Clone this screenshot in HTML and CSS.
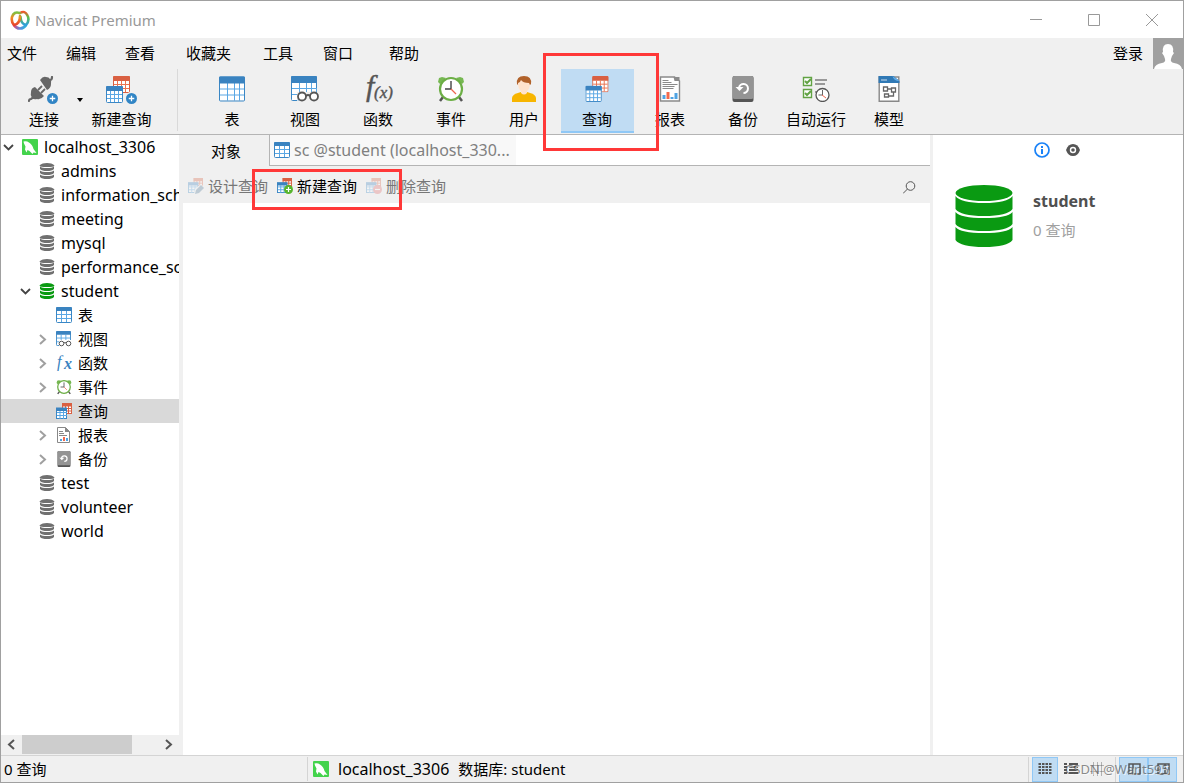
FILE: index.html
```html
<!DOCTYPE html>
<html lang="zh-CN">
<head>
<meta charset="utf-8">
<title>Navicat Premium</title>
<link rel="stylesheet" href="styles.css">
</head>
<body>
<svg class="sprite" aria-hidden="true">
  <defs>
    <linearGradient id="logo-left" x1="0" y1="0" x2="0" y2="1"><stop offset="0" stop-color="#7cc142"/><stop offset=".4" stop-color="#f08a24"/><stop offset="1" stop-color="#e8432e"/></linearGradient>
    <linearGradient id="logo-right" x1="0" y1="0" x2="0" y2="1"><stop offset="0" stop-color="#ee5a2c"/><stop offset=".4" stop-color="#5cbf4a"/><stop offset="1" stop-color="#2f9fe0"/></linearGradient>
    <linearGradient id="logo-base" x1="0" y1="0" x2="1" y2="0"><stop offset="0" stop-color="#d24a7c"/><stop offset=".5" stop-color="#5b8be0"/><stop offset="1" stop-color="#2ab6d9"/></linearGradient>
  </defs>
  <symbol id="table" viewBox="0 0 26 25"><path fill="#fff" d="M1 5h24v19H1z"/><path stroke="#5aa7e4" fill="none" d="M1 12.500h24M1 18.500h24M8.500 6v18M15.500 6v18M20.500 6v18"/><rect x=".5" y=".5" width="25" height="24" rx="1" fill="none" stroke="#3a87c5"/><path fill="#3a83c0" d="M0 1q0-1 1-1h24q1 0 1 1v6H0z"/></symbol>
  <symbol id="table-s" viewBox="0 0 16 16"><rect x=".5" y=".5" width="15" height="15" rx="1" fill="#fff" stroke="#3a87c5"/><path stroke="#5aa7e4" fill="none" d="M1 7.500h14M1 11.500h14M5.500 4v11M10.500 4v11"/><path fill="#3a83c0" d="M0 1q0-1 1-1h14q1 0 1 1v3H0z"/></symbol>
  <symbol id="grid-blue" viewBox="0 0 17 17"><rect x=".5" y=".5" width="16" height="16" rx="1" fill="#fff" stroke="#3a87c5"/><path stroke="#5aa7e4" fill="none" d="M1 8.500h15M1 12.500h15M4.500 5v11M8.500 5v11M12.500 5v11"/><path fill="#3a83c0" d="M0 1q0-1 1-1h15q1 0 1 1v4H0z"/></symbol>
  <symbol id="grid-red" viewBox="0 0 17 17"><rect x=".5" y=".5" width="16" height="16" rx="1" fill="#fff" stroke="#d96042"/><path stroke="#ea7350" fill="none" d="M1 8.500h15M1 12.500h15M4.500 5v11M8.500 5v11M12.500 5v11"/><path fill="#d96042" d="M0 1q0-1 1-1h15q1 0 1 1v4H0z"/></symbol>
  <symbol id="query" viewBox="0 0 24 27"><use href="#grid-red" x="7" y="0" width="17" height="17"/><use href="#grid-blue" x="0" y="10" width="17" height="17"/></symbol>
  <symbol id="query-s" viewBox="0 0 16 16"><rect x="6.500" y=".5" width="9" height="10" fill="#fff" stroke="#d96042"/><path stroke="#d96042" d="M7 5.500h9M7 8h9M12.500 3v8M9.500 3v8"/><path fill="#d96042" d="M6 0h10v3.500H6z"/><rect x=".5" y="5.500" width="10" height="10" fill="#fff" stroke="#3a87c5"/><path stroke="#5aa7e4" d="M1 9.500h10M1 12.500h10M4 8v8M7.500 8v8"/><path fill="#3a83c0" d="M0 4.500h11V8H0z"/></symbol>
  <symbol id="plus-blue" viewBox="0 0 12 12"><circle cx="6" cy="6" r="6" fill="#3185c5"/><path d="M6 3v6M3 6h6" stroke="#fff" stroke-width="1.400"/></symbol>
  <symbol id="query-add" viewBox="0 0 32 28"><use href="#query" width="24" height="27"/><circle cx="25.500" cy="22.500" r="6.500" fill="#f0f0f0"/><use href="#plus-blue" x="20" y="17" width="11" height="11"/></symbol>
  <symbol id="plug" viewBox="0 0 32 28"><path fill="none" stroke="#666" stroke-width="2.200" stroke-linecap="round" d="M1 25q0-2 2-2l3-2M24 1q0 3-2 3l-2 1"/><path fill="#666" d="m7 11 9 9q-3 4-7 3-3 1-5-1-2-3-1-6 0-4 4-5zM12 4q3-4 6-3 3 0 4 2 2 2 1 5 0 4-4 6z"/><path stroke="#666" stroke-width="1.800" d="m10 14 4-4m-1 7 4-4"/><circle cx="24.500" cy="22.500" r="6.500" fill="#f0f0f0"/><use href="#plus-blue" x="19" y="17" width="11" height="11"/></symbol>
  <symbol id="view" viewBox="0 0 28 26"><use href="#table" width="26" height="25"/><path fill="#f0f0f0" d="M6 16h22v10H6z"/><path stroke="#5aa7e4" d="M6.500 24h2M25.500 12v5"/><g fill="none" stroke="#555" stroke-width="1.800"><circle cx="11" cy="20.500" r="4" fill="#fff"/><circle cx="23" cy="20.500" r="4" fill="#fff"/><path d="M15 20q2-2 4 0"/></g></symbol>
  <symbol id="view-s" viewBox="0 0 16 16"><use href="#table-s" width="15" height="15"/><path fill="#fff" d="M3 9h13v7H3z"/><g fill="#fff" stroke="#555"><circle cx="5.500" cy="12.500" r="2.300"/><circle cx="12.500" cy="12.500" r="2.300"/><path d="M8 12q1-1 2 0"/></g></symbol>
  <symbol id="clock" viewBox="0 0 28 26"><path stroke="#555" stroke-width="2.500" d="m6 21-3 4m19-4 3 4"/><path fill="#76b852" d="m1 6 1-4 3-1 4 1-6 6zM27 6l-1-4-3-1-4 1 6 6z"/><circle cx="14" cy="13" r="11" fill="#fff" stroke="#6cae45" stroke-width="2.200"/><path stroke="#444" stroke-width="1.400" fill="none" d="M14 5v8H8"/><path stroke="#ef6650" stroke-width="1.300" d="m14 13 5 5"/></symbol>
  <symbol id="user" viewBox="0 0 24 26"><path fill="#f7b500" d="M0 26v-4q0-4 9-6h6q9 2 9 6v4z"/><path fill="#ffe3cc" d="M9 13h6v4q-3 3-6 0z"/><path fill="#ffe3cc" d="M6 5q6-5 12 0v4q-1 7-6 7T6 9z"/><path fill="#b1622a" d="M5 8q-1-8 7-8t7 8l-1 1-1-2q-6 0-8-3-1 3-3 3v2z"/></symbol>
  <symbol id="report" viewBox="0 0 21 26"><path fill="#fff" stroke="#8a8a8a" stroke-width="1.400" d="M1 1h14l5 4v20H1z"/><path fill="#8a8a8a" d="M14 1h6v4h-5z"/><path stroke="#8a8a8a" d="M3 4.500h6M3 6.500h9M3 8.500h15M3 10.500h12M3 12.500h11"/><path fill="#4fa3e3" d="M3 19h3v4H3zM11 21h3v2h-3zM15 17h3v6h-3z"/><path fill="#f2694c" d="M7 16h3v7H7z"/></symbol>
  <symbol id="report-s" viewBox="0 0 16 16"><path fill="#fff" stroke="#888" d="M1.500.5h8l4 4v11h-12z"/><path fill="#888" d="M9 0v5h5z"/><path stroke="#888" d="M3 4.500h4M3 6.500h5M3 8.500h8"/><path fill="#4fa3e3" d="M4 12h2v2H4zM10 11h2v3h-2z"/><path fill="#f2694c" d="M7 10h2v4H7z"/></symbol>
  <symbol id="backup" viewBox="0 0 21 26"><rect width="21" height="26" rx="2" fill="#555"/><rect width="21" height="23" rx="2" fill="#949494"/><path fill="none" stroke="#fff" stroke-width="2" d="M6.500 12a4.500 4.500 0 1 1 4.500 5"/><path fill="#fff" d="M3 11h8l-4 4z"/></symbol>
  <symbol id="auto" viewBox="0 0 28 26"><g fill="#fff" stroke="#62a344" stroke-width="1.400"><path d="M1.500 1.500h8v8h-8zM1.500 13.500h8v8h-8z"/><path fill="none" stroke-width="2" d="m3 5 2 2 4-4M3 17l2 2 4-4"/></g><path stroke="#999" stroke-width="2" d="M13 4h12M13 8h10M13 16h3"/><circle cx="20.500" cy="19" r="6.500" fill="#fff" stroke="#555" stroke-width="1.300"/><path fill="none" stroke="#666" d="M20.500 14v5h-4"/><path stroke="#ef6650" d="m20 19 4 3"/></symbol>
  <symbol id="model" viewBox="0 0 21 26"><path fill="#fff" stroke="#888" stroke-width="1.400" d="M.7 1h19.600v24.300H.7z"/><path fill="#3079b5" d="M0 0h15l6 5v2H0z"/><path fill="#64aeea" d="M14 0q1 5 7 5z"/><path stroke="#fff" stroke-dasharray="1 1" stroke-width="1.500" d="M3 4h6"/><g fill="none" stroke="#666" stroke-width="1.300"><path d="M5 11h4v4H5zM13 12h4v4h-4zM6 18h4v3H6zM9 13h4M15 16v4h-5"/></g></symbol>
  <symbol id="db" viewBox="0 0 58 62"><g fill="currentColor"><ellipse cx="29" cy="8" rx="28.500" ry="8"/><path d="M.5 11q5 7 28.500 7t28.500-7v13q-5 7-28.500 7T.5 24z"/><path d="M.5 27q5 6 28.500 6t28.500-6v12q-5 7-28.500 7T.5 39z"/><path d="M.5 42q5 6 28.500 6t28.500-6v13q-5 7-28.500 7T.5 55z"/></g></symbol>
  <symbol id="db-s" viewBox="0 0 16 16"><path fill="currentColor" d="M1 2q2-2 7-2t7 2-7 2-7-2zM1 3.500q2 1.500 7 1.500t7-1.500V6q-2 2-7 2T1 6zM1 7.500Q3 9 8 9t7-1.500V10q-2 2-7 2t-7-2zM1 11.500Q3 13 8 13t7-1.500V14q-2 2-7 2t-7-2z"/></symbol>
  <symbol id="mysql" viewBox="0 0 16 16"><rect width="16" height="16" rx="1" fill="#43d34c"/><path fill="#fff" d="M1.500 2.500q3-1 5.500 1 3.500 2 4.500 6.500l3 4-3-.5-1 1.500-3-3-2-1-1 2.500-1.500-3 .5-3-1.500-3z"/></symbol>
  <symbol id="down" viewBox="0 0 13 13"><path d="m2 4 4.500 4.500L11 4" fill="none" stroke="#444" stroke-width="1.800"/></symbol>
  <symbol id="right" viewBox="0 0 13 13"><path d="m4 2 5 4.500L4 11" fill="none" stroke="currentColor" stroke-width="2"/></symbol>
  <symbol id="badge-add" viewBox="0 0 16 16"><use href="#query-s" width="15" height="15"/><circle cx="11.500" cy="11.500" r="4.500" fill="#57b52e"/><path stroke="#fff" stroke-width="1.200" d="M11.500 9v5M9 11.500h5"/></symbol>
  <symbol id="badge-del" viewBox="0 0 16 16"><use href="#query-s" width="15" height="15"/><circle cx="11.500" cy="11.500" r="4.500" fill="#e26868"/><path stroke="#fff" stroke-width="1.200" d="M9 11.500h5"/></symbol>
  <symbol id="badge-edit" viewBox="0 0 16 16"><use href="#query-s" width="15" height="15"/><path fill="#f0f0f0" d="m6 16 1-5 6-5 3 3-6 7z"/><path fill="#4c7899" d="m7 16 1-4 5-5 3 3-5 5z"/></symbol>
</svg>

<div class="window">
  <header class="titlebar">
    <svg class="logo" viewBox="0 0 20 20" aria-hidden="true"><g fill="none" stroke-width="2.600" stroke-linecap="round"><path stroke="url(#logo-base)" d="M4 15q2 3.500 6 3.500t6-3.500"/><path stroke="url(#logo-right)" d="M10 3q5-3 7.500 2.500 2.500 5-1.500 9.500-5-1-5.500-8"/><path stroke="url(#logo-left)" d="M9.500 3Q4 1 2 7q-1 5 2 8 6-1 6-9"/></g></svg>
    <h1 class="title">Navicat Premium</h1>
    <div class="window-controls">
      <button aria-label="最小化"><svg viewBox="0 0 12 12"><path d="M0 5.500h12"/></svg></button>
      <button aria-label="最大化"><svg viewBox="0 0 12 12"><path d="M.5.5h11v11H.5z"/></svg></button>
      <button aria-label="关闭"><svg viewBox="0 0 12 12"><path d="m0 0 12 12M12 0 0 12"/></svg></button>
    </div>
  </header>

  <div class="menubar">
    <nav class="menu">
      <button>文件</button><button>编辑</button><button>查看</button><button>收藏夹</button><button>工具</button><button>窗口</button><button>帮助</button>
    </nav>
    <button class="login"><span>登录</span><svg viewBox="0 0 30 31" aria-hidden="true"><path fill="#a0a0a0" d="M0 0h30v31H0z"/><path fill="#fff" d="M1 31q1-5 8-6 4-1 3-4l-1-3-2-3 1-1q-1-8 5-8t5 8l1 1-2 3-1 3q-1 3 3 4 7 1 8 6z"/></svg></button>
  </div>

  <div class="toolbar">
    <div class="tools-start">
      <button class="tool connect"><svg class="i32"><use href="#plug"/></svg>连接</button>
      <button class="drop" aria-label="连接类型"></button>
      <button class="tool new-query"><svg class="i32"><use href="#query-add"/></svg>新建查询</button>
    </div>
    <div class="tools-main">
      <button class="tool"><svg class="i26"><use href="#table"/></svg>表</button>
      <button class="tool"><svg class="i28"><use href="#view"/></svg>视图</button>
      <button class="tool"><svg class="i28 fn" viewBox="0 0 28 26"><text class="fn-f" x="2" y="20">f</text><text class="fn-x" x="10" y="22">(x)</text></svg>函数</button>
      <button class="tool"><svg class="i28"><use href="#clock"/></svg>事件</button>
      <button class="tool"><svg class="i24"><use href="#user"/></svg>用户</button>
      <button class="tool active" aria-pressed="true"><svg class="i24"><use href="#query"/></svg>查询</button>
      <button class="tool"><svg class="i24"><use href="#report"/></svg>报表</button>
      <button class="tool"><svg class="i24"><use href="#backup"/></svg>备份</button>
      <button class="tool"><svg class="i28"><use href="#auto"/></svg>自动运行</button>
      <button class="tool"><svg class="i24"><use href="#model"/></svg>模型</button>
    </div>
  </div>

  <div class="workspace">
    <aside class="sidebar">
      <ul class="tree">
        <li class="node"><svg class="chevron"><use href="#down"/></svg><svg class="i16"><use href="#mysql"/></svg>localhost_3306</li>
        <li class="node level-1"><span class="chevron"></span><svg class="i16"><use href="#db-s"/></svg>admins</li>
        <li class="node level-1"><span class="chevron"></span><svg class="i16"><use href="#db-s"/></svg>information_schema</li>
        <li class="node level-1"><span class="chevron"></span><svg class="i16"><use href="#db-s"/></svg>meeting</li>
        <li class="node level-1"><span class="chevron"></span><svg class="i16"><use href="#db-s"/></svg>mysql</li>
        <li class="node level-1"><span class="chevron"></span><svg class="i16"><use href="#db-s"/></svg>performance_schema</li>
        <li class="node level-1"><svg class="chevron"><use href="#down"/></svg><svg class="i16 open"><use href="#db-s"/></svg>student</li>
        <li class="node level-2"><span class="chevron"></span><svg class="i16"><use href="#table-s"/></svg>表</li>
        <li class="node level-2"><svg class="chevron"><use href="#right"/></svg><svg class="i16"><use href="#view-s"/></svg>视图</li>
        <li class="node level-2"><svg class="chevron"><use href="#right"/></svg><svg class="i16 fn-small" viewBox="0 0 16 16"><text x="1" y="12">f</text><text class="bold" x="8" y="14">x</text></svg>函数</li>
        <li class="node level-2"><svg class="chevron"><use href="#right"/></svg><svg class="i16"><use href="#clock"/></svg>事件</li>
        <li class="node level-2 selected"><span class="chevron"></span><svg class="i16"><use href="#query-s"/></svg>查询</li>
        <li class="node level-2"><svg class="chevron"><use href="#right"/></svg><svg class="i16"><use href="#report-s"/></svg>报表</li>
        <li class="node level-2"><svg class="chevron"><use href="#right"/></svg><svg class="i16"><use href="#backup"/></svg>备份</li>
        <li class="node level-1"><span class="chevron"></span><svg class="i16"><use href="#db-s"/></svg>test</li>
        <li class="node level-1"><span class="chevron"></span><svg class="i16"><use href="#db-s"/></svg>volunteer</li>
        <li class="node level-1"><span class="chevron"></span><svg class="i16"><use href="#db-s"/></svg>world</li>
      </ul>
      <div class="scrollbar">
        <button aria-label="向左滚动"><svg class="chevron flip"><use href="#right"/></svg></button>
        <div class="track"><div class="thumb"></div></div>
        <button aria-label="向右滚动"><svg class="chevron"><use href="#right"/></svg></button>
      </div>
    </aside>

    <main class="content">
      <div class="tabs">
        <button class="tab current">对象</button>
        <div class="tab-strip"><button class="tab"><svg class="i16"><use href="#table-s"/></svg>sc @student (localhost_330...</button></div>
      </div>
      <div class="actions">
        <button class="action" disabled><svg class="i16"><use href="#badge-edit"/></svg>设计查询</button>
        <button class="action"><svg class="i16"><use href="#badge-add"/></svg>新建查询</button>
        <button class="action" disabled><svg class="i16"><use href="#badge-del"/></svg>删除查询</button>
        <button class="search" aria-label="搜索"><svg viewBox="0 0 13 13"><circle cx="7.500" cy="5" r="4.300"/><path d="M4.500 8 0 12.500"/></svg></button>
      </div>
      <div class="objects"></div>
    </main>

    <aside class="details">
      <div class="detail-tabs">
        <button aria-label="信息"><svg viewBox="0 0 16 16"><circle cx="8" cy="8" r="7" fill="none" stroke="#1a82f7" stroke-width="1.700"/><path fill="#1a82f7" d="M7 4h2v2H7zM7 7h2v5H7z"/></svg></button>
        <button aria-label="预览"><svg viewBox="0 0 16 16"><path fill="#555" d="M1 8q2-6 7-6t7 6q-2 6-7 6T1 8z"/><circle cx="8" cy="8" r="2.500" fill="none" stroke="#fff" stroke-width="1.400"/></svg></button>
      </div>
      <div class="summary">
        <svg class="big-db"><use href="#db"/></svg>
        <div><h2>student</h2><p>0 查询</p></div>
      </div>
    </aside>
  </div>

  <footer class="statusbar">
    <div class="count">0 查询</div>
    <div class="path"><svg class="i16"><use href="#mysql"/></svg><span class="host">localhost_3306</span><span>数据库: student</span></div>
    <div class="view-modes">
      <button class="mode on" aria-label="列表"><svg viewBox="0 0 16 16"><path stroke-dasharray="2.500 1" stroke-width="2" d="M1.500 3h13M1.500 6h13M1.500 9h13M1.500 12h13"/></svg></button>
      <button class="mode" aria-label="详细信息"><svg viewBox="0 0 16 16"><path stroke-width="2" d="M1 3h3m2 0h9M1 6h3m2 0h9M1 9h3m2 0h9M1 12h3m2 0h9"/></svg></button>
      <button class="mode" aria-label="ER 图表"><svg viewBox="0 0 16 16"><path d="M4.500 1v14M8.500 1v14M12.500 1v14M1 4.500h14M1 10.500h14" opacity=".4"/></svg></button>
    </div>
    <div class="pane-modes">
      <button class="mode on" aria-label="导航窗格"><svg viewBox="0 0 16 16"><path stroke-width="1.500" d="M3 3h11v10H3zM7 3v10"/></svg></button>
      <button class="mode on" aria-label="信息窗格"><svg viewBox="0 0 16 16"><path stroke-width="1.500" d="M3 3h11v10H3zM10 3v10"/></svg></button>
    </div>
    <span class="watermark">CSDN @Want595</span>
  </footer>

  <div class="mark mark-tool"></div>
  <div class="mark mark-action"></div>
</div>
</body>
</html>
```
FILE: styles.css
```css
* { box-sizing: border-box; }
body { margin: 0; font: 15px/20px "Noto Sans", "Noto Sans CJK SC", sans-serif; color: #000; }
button { margin: 0; padding: 0; border: 0; background: none; font: inherit; color: inherit; }
h1, h2, p, ul { margin: 0; padding: 0; }
svg { display: block; flex: none; }
.sprite { position: absolute; width: 0; height: 0; }

.window { position: relative; display: flex; flex-direction: column; min-height: 100vh; background: #f0f0f0; border: 1px solid #a0a0a0; }

.titlebar { display: flex; align-items: center; height: 37px; padding-left: 9px; background: #fff; }
.logo { width: 20px; height: 20px; }
.title { margin-left: 5px; font-size: 15px; font-weight: 400; color: #999; }
.window-controls { display: flex; margin: 0 2px 0 auto; }
.window-controls button { display: grid; place-items: center; width: 58px; height: 36px; }
.window-controls svg { width: 12px; height: 12px; fill: none; stroke: #999; }

.menubar { display: flex; justify-content: space-between; height: 31px; }
.menu { display: grid; grid-template-columns: 59px 59px 61px 77px 60px 66px auto; padding: 0 0 2px 6px; }
.menu button { text-align: left; }
.login { display: flex; align-items: center; gap: 10px; }
.login span { padding-bottom: 2px; }
.login svg { width: 30px; height: 31px; }

.toolbar { display: flex; height: 66px; border-bottom: 1px solid #b4b4b4; }
.tools-start { display: flex; width: 177px; margin-bottom: 3px; border-right: 1px solid #d9d9d9; }
.tools-main { display: flex; padding-left: 18px; }
.tool { display: flex; flex-direction: column; align-items: center; justify-content: space-between; width: 73px; height: 64px; padding: 7px 1px 4px 0; white-space: nowrap; }
.tool svg { height: 26px; }
.tools-start .tool { width: 74px; }
.tools-start .tool svg { height: 28px; margin-bottom: -2px; }
.connect { padding-left: 13px; }
.drop { align-self: center; width: 10px; height: 4px; background: #000; clip-path: polygon(20% 0, 80% 0, 50% 100%); }
.active { background: #c0dcf3; border-bottom: 2px solid #90c8f6; padding-bottom: 2px; }
.fn, .fn-small { overflow: visible; font-family: "Liberation Serif", serif; font-style: italic; }
.fn { fill: #555; stroke: #555; stroke-width: .4px; }
.fn-f { font-size: 30px; }
.fn-x { font-size: 17px; }
.fn-small { fill: #3a83c0; font-size: 16px; }
.bold { font-weight: bold; }
.i16 { width: 16px; height: 16px; }
.i24 { width: 24px; }
.i26 { width: 26px; }
.i28 { width: 28px; }
.i32 { width: 32px; }

.workspace { display: flex; flex: 1; }
.sidebar { display: flex; flex-direction: column; width: 178px; background: #fff; }
.tree { flex: 1; list-style: none; overflow: hidden; }
.node { display: flex; align-items: center; height: 24px; padding-left: 1px; font-size: 16px; white-space: nowrap; }
.node .i16 { margin: 0 6px 0 7px; color: #707070; }
.node .open { color: #0a9a12; }
.chevron { flex: none; width: 13px; height: 13px; color: #a0a0a0; }
.level-1 { padding-left: 18px; }
.level-2 { padding-left: 35px; font-size: 15px; }
.selected { background: #d9d9d9; }
.scrollbar { display: flex; height: 20px; background: #f0f0f0; }
.scrollbar button { display: grid; place-items: center; width: 21px; padding-bottom: 1px; }
.scrollbar .chevron { color: #555; }
.flip { transform: rotate(180deg); }
.track { flex: 1; }
.thumb { width: 81%; height: 19px; background: #cdcdcd; }

.content { display: flex; flex: 1; flex-direction: column; min-width: 0; margin: 0 3px 0 4px; }
.tabs { display: flex; height: 31px; }
.tab { display: flex; align-items: center; gap: 4px; }
.current { justify-content: center; width: 86px; }
.tab-strip { display: flex; flex: 1; background: #fff; border-left: 1px solid #b4b4b4; border-bottom: 1px solid #b4b4b4; }
.tab-strip .tab { width: 246px; padding-left: 4px; font-size: 16px; background: #f8f8f8; color: #808080; white-space: nowrap; }
.actions { display: flex; align-items: center; gap: 9px; height: 37px; padding: 2px 14px 0 5px; }
.action { display: flex; align-items: center; gap: 4px; height: 32px; white-space: nowrap; }
.action:disabled { color: #777; }
.action:disabled svg { opacity: .3; }
.search { margin-left: auto; padding-top: 3px; }
.search svg { width: 13px; height: 13px; fill: none; stroke: #555; }
.objects { flex: 1; background: #fff; }

.details { width: 250px; background: #fff; }
.detail-tabs { display: flex; justify-content: center; gap: 15px; padding: 7px 2px 0 0; }
.detail-tabs svg { width: 16px; height: 16px; }
.summary { display: flex; gap: 20px; padding: 27px 22px; }
.big-db { width: 58px; height: 62px; color: #0a9a12; }
.summary h2 { margin-top: 6px; font-size: 16px; line-height: 20px; color: #505050; }
.summary p { margin-top: 9px; color: #a0a0a0; }

.statusbar { position: relative; display: flex; align-items: center; height: 27px; border-top: 1px solid #d4d4d4; }
.count { width: 307px; padding-left: 3px; line-height: 24px; border-right: 1px solid #d4d4d4; }
.path { display: flex; flex: 1; align-items: center; gap: 9px; padding-left: 5px; }
.host { font-size: 16px; }
.view-modes { display: flex; width: 87px; padding-left: 3px; border-left: 1px solid #d4d4d4; }
.pane-modes { display: flex; padding: 0 6px 0 3px; border-left: 1px solid #d4d4d4; }
.mode { display: grid; place-items: center; width: 26px; height: 25px; }
.pane-modes .mode { width: 29px; }
.mode svg { width: 16px; height: 16px; fill: none; stroke: #555; }
.on { background: #c0dcf3; border: 1px solid #90c8f6; }
.watermark { position: absolute; right: 14px; top: 3px; font-size: 13px; color: #555; opacity: .65; text-shadow: 1px 1px #fff; }

.mark { position: absolute; border: 3px solid #ff3838; pointer-events: none; }
.mark-tool { left: 542px; top: 52px; width: 116px; height: 98px; }
.mark-action { left: 251px; top: 168px; width: 150px; height: 41px; }
```
